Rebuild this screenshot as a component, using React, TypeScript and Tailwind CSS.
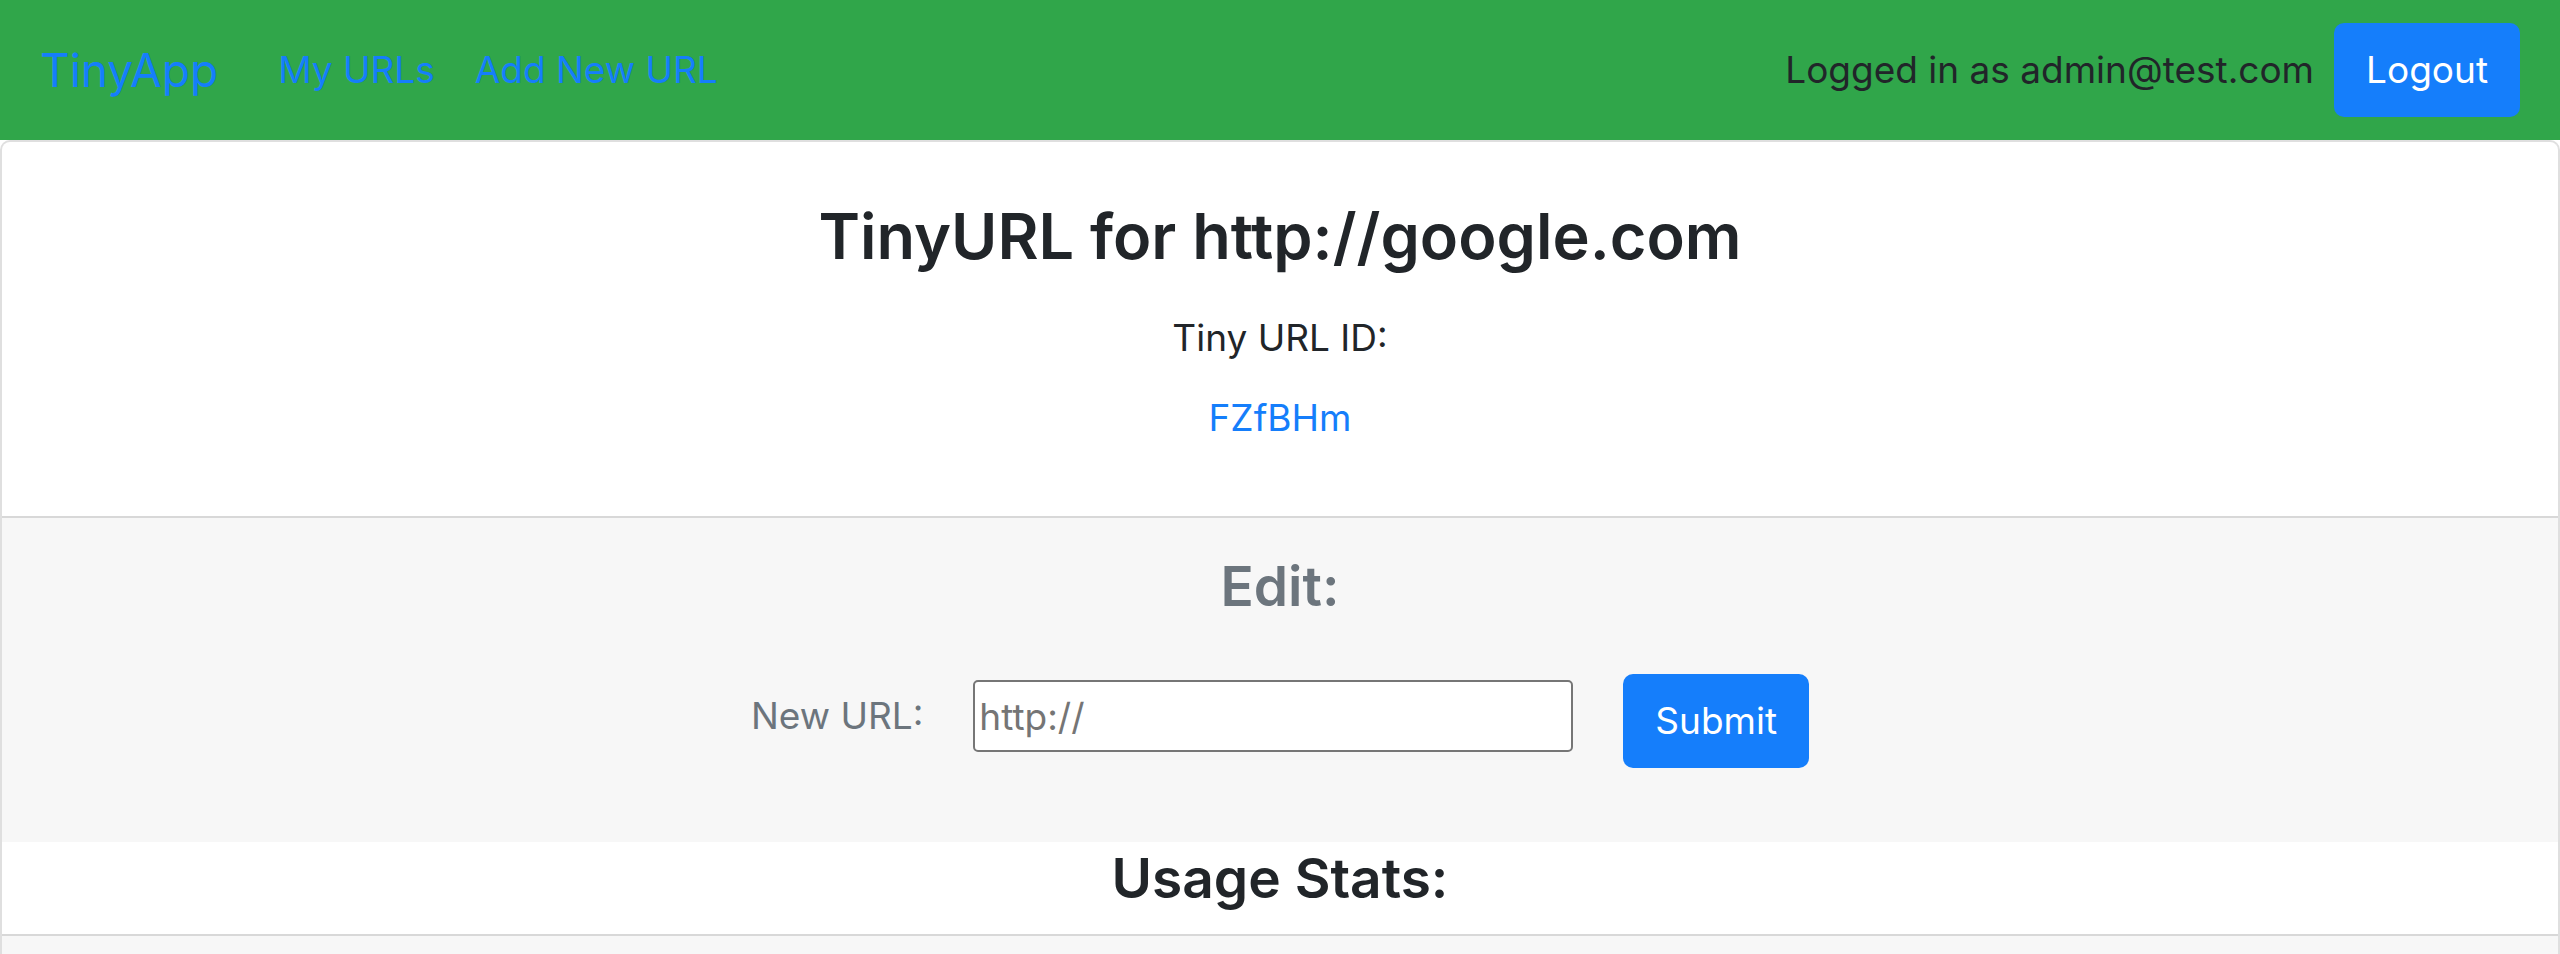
const link = "text-[#157efb] no-underline";
const button =
  "h-[94px] rounded-[10px] bg-[#157efb] px-8 text-[37px] leading-[60px] text-white";

function NavBar() {
  return (
    <nav className="flex items-center justify-between bg-[#30a64a] px-10 py-[23px] text-[37px] leading-[60px]">
      <div className="flex items-center">
        <a href="#home" className={`${link} mr-[60px] text-[46px] leading-[75px]`}>
          TinyApp
        </a>
        <div className="flex gap-10">
          <a href="#urls" className={link}>My URLs</a>
          <a href="#new" className={link}>Add New URL</a>
        </div>
      </div>
      <form className="flex items-center gap-5" onSubmit={(e) => e.preventDefault()}>
        <span>Logged in as admin@test.com</span>
        <button className={button}>Logout</button>
      </form>
    </nav>
  );
}

export default function App() {
  return (
    <div className="font-[Inter,sans-serif] text-[#212529]">
      <NavBar />
      <main className="rounded-t-[10px] border-2 border-b-0 border-[#dfdfdf] text-center">
        <section className="px-12 pt-[52px] pb-[68px] text-[37px] leading-[60px]">
          <h2 className="mb-[30px] text-[63px] leading-[84px] font-semibold">
            TinyURL for http://google.com
          </h2>
          <p className="mb-5">Tiny URL ID:</p>
          <p>
            <a href="#FZfBHm" className={link}>FZfBHm</a>
          </p>
        </section>
        <section className="border-t-2 border-[#d8d8d8] bg-[#f7f7f7] pt-8 pb-[74px] text-[#6c757d]">
          <h3 className="mb-[52px] text-[55px] leading-[72px] font-semibold">Edit:</h3>
          <form
            className="flex items-center justify-center gap-[50px] text-[37px] leading-[60px]"
            onSubmit={(e) => e.preventDefault()}
          >
            <div className="flex items-center gap-[50px] pb-[10px]">
              <label htmlFor="longURL">New URL:</label>
              <input
                id="longURL"
                placeholder="http://"
                className="h-[72px] w-[600px] rounded-[5px] border-2 border-[#767676] bg-white px-1 placeholder:text-[#757575]"
              />
            </div>
            <button className={button}>Submit</button>
          </form>
        </section>
        <h3 className="mb-5 text-[55px] leading-[72px] font-semibold">Usage Stats:</h3>
        <div className="h-5 border-t-2 border-[#d8d8d8] bg-[#f7f7f7]" />
      </main>
    </div>
  );
}
